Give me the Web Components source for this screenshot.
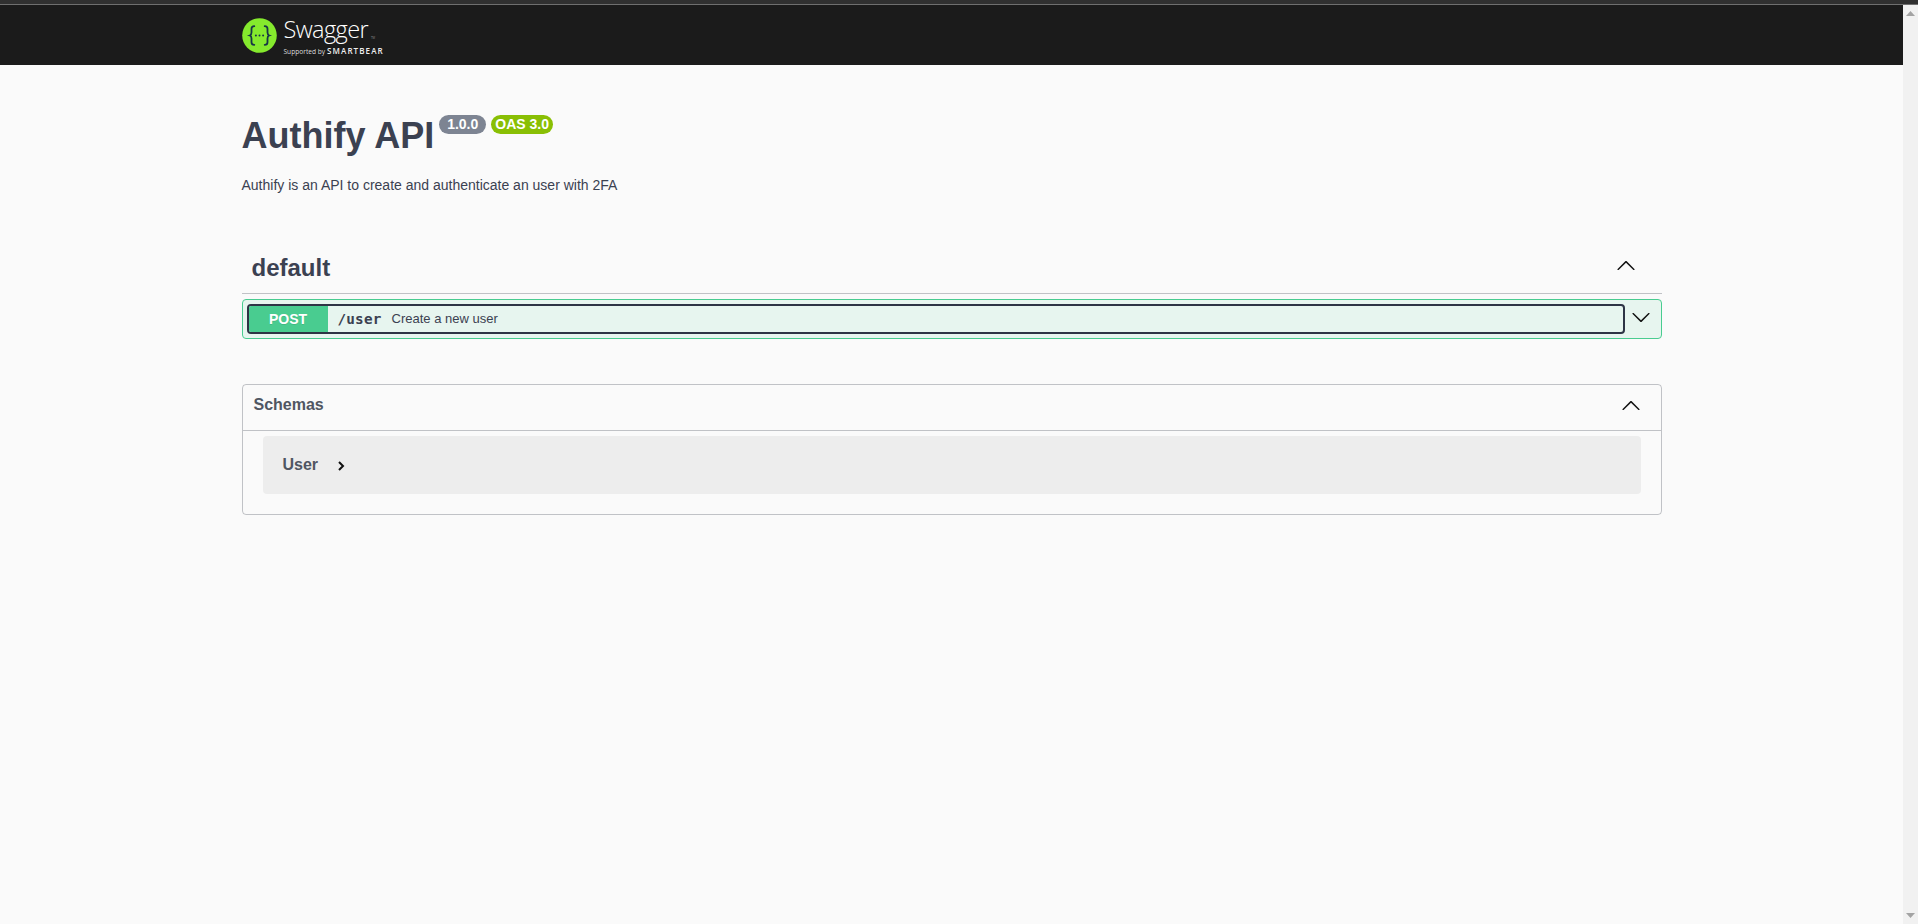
<!DOCTYPE html>
<html lang="en">
<head>
<meta charset="utf-8">
<title>Authify API</title>
<style>
  html, body { margin: 0; height: 100%; overflow: hidden; background: #fafafa; }
  body { font-family: "Liberation Sans", Arial, sans-serif; color: #3b4151; }
</style>
</head>
<body>
<swagger-app>
  <swagger-topbar slot="top"></swagger-topbar>
  <swagger-info title="Authify API" version="1.0.0" oas="OAS 3.0">
    Authify is an API to create and authenticate an user with 2FA
  </swagger-info>
  <api-tag name="default">
    <api-operation method="POST" path="/user">Create a new user</api-operation>
  </api-tag>
  <schema-section>
    <schema-model>User</schema-model>
  </schema-section>
</swagger-app>

<script>
// chevrons are the same swagger-ui arrow, only rotated
function arrowSvg(size, rotate) {
    return `<svg width="${size}" height="${size}" viewBox="0 0 20 20" style="transform: rotate(${rotate}deg)" aria-hidden="true">
        <path fill="currentColor" d="M17.418 6.109c.272-.268.709-.268.979 0s.271.701 0 .969l-7.908 7.83c-.27.268-.707.268-.979 0l-7.908-7.83c-.27-.268-.27-.701 0-.969.271-.268.709-.268.979 0L10 13.25l7.418-7.141z"/>
    </svg>`;
}

class SwaggerApp extends HTMLElement {
    constructor() {
        super();
        this.attachShadow({ mode: 'open' });
        this.shadowRoot.innerHTML = `
            <style>
                :host { display: flex; flex-direction: column; height: 924px; }
                .strip { height: 4px; background: #303030; flex: none; }
                .line { height: 1px; background: #6f6f6f; flex: none; }
                .body { display: flex; flex: 1; min-height: 0; }
                main { flex: 1; min-width: 0; }
                .wrapper { width: 1420px; margin: 0 auto; padding: 0 20.5px; box-sizing: content-box; }
            </style>
            <div class="strip"></div>
            <div class="line"></div>
            <div class="body">
                <main>
                    <slot name="top"></slot>
                    <div class="wrapper"><slot></slot></div>
                </main>
                <fake-scrollbar></fake-scrollbar>
            </div>
        `;
    }
}

class FakeScrollbar extends HTMLElement {
    constructor() {
        super();
        this.attachShadow({ mode: 'open' });
        this.shadowRoot.innerHTML = `
            <style>
                :host { display: flex; flex-direction: column; justify-content: space-between; width: 15px; flex: none; background: #f1f1f1; }
                div { height: 17px; display: flex; align-items: center; justify-content: center; }
                svg { display: block; }
            </style>
            <div><svg width="9" height="5"><path d="M4.5 0 9 5H0z" fill="#a3a3a3"/></svg></div>
            <div><svg width="9" height="5"><path d="M0 0h9L4.5 5z" fill="#a3a3a3"/></svg></div>
        `;
    }
}

class SwaggerTopbar extends HTMLElement {
    constructor() {
        super();
        this.attachShadow({ mode: 'open' });
        this.shadowRoot.innerHTML = `
            <style>
                :host { display: block; background: #1b1b1b; height: 60px; }
                .inner { width: 1420px; margin: 0 auto; height: 100%; display: flex; align-items: center; gap: 7px; }
                .words { display: flex; flex-direction: column; color: #fff; }
                .name { font: 300 23.5px/30px "Open Sans", sans-serif; letter-spacing: -0.6px; display: flex; align-items: flex-end; }
                .name small { font-size: 3px; line-height: 12px; margin-left: 3px; letter-spacing: 0; color: #bbb; }
                .by { font: 400 6.6px/9px "Open Sans", sans-serif; display: flex; align-items: baseline; gap: 2px; color: #ddd; margin-top: 2px; }
                .by b { font: 600 8px/9px "Open Sans", sans-serif; letter-spacing: 1.1px; color: #eee; }
            </style>
            <div class="inner">
                <svg width="35" height="35" viewBox="0 0 35 35" aria-hidden="true">
                    <circle cx="17.5" cy="17.5" r="17.3" fill="#85ea2d"/>
                    <g fill="none" stroke="#173647" stroke-width="1.8" stroke-linecap="round">
                        <path d="M12.3 8.2c-2 0-2.800.8-2.800 2.600v3.800c0 1.600-.5 2.500-1.700 2.900 1.200.4 1.700 1.300 1.700 2.900v3.800c0 1.800.8 2.600 2.800 2.600"/>
                        <path d="M22.700 8.200c2 0 2.800.8 2.800 2.600v3.800c0 1.600.5 2.500 1.700 2.900-1.200.4-1.700 1.300-1.700 2.900v3.800c0 1.800-.8 2.600-2.800 2.600"/>
                    </g>
                    <g fill="#173647">
                        <circle cx="13.900" cy="17.500" r="1"/>
                        <circle cx="17.500" cy="17.500" r="1"/>
                        <circle cx="21.100" cy="17.500" r="1"/>
                    </g>
                </svg>
                <div class="words">
                    <div class="name">Swagger<small>TM</small></div>
                    <div class="by">Supported by <b>SMARTBEAR</b></div>
                </div>
            </div>
        `;
    }
}

class SwaggerInfo extends HTMLElement {
    constructor() {
        super();
        this.attachShadow({ mode: 'open' });
        this.shadowRoot.innerHTML = `
            <style>
                :host { display: block; padding: 50px 0 0; }
                h1 { margin: 0; font-size: 36px; line-height: 42px; font-weight: 700; color: #3b4151; display: flex; align-items: flex-start; }
                .badge { font-size: 14px; font-weight: 700; line-height: 19px; height: 19px; color: #fff; border-radius: 57px; padding: 0 8px; margin-top: 0; }
                .version { background: #7d8492; margin-left: 5px; }
                .oas { background: #89bf04; margin-left: 5px; padding: 0 4px; }
                p { margin: 0; padding-top: 18px; font-size: 14px; line-height: 20px; color: #3b4151; }
            </style>
            <h1><span class="t"></span><span class="badge version"></span><span class="badge oas"></span></h1>
            <p><slot></slot></p>
        `;
        this.shadowRoot.querySelector('.t').textContent = this.getAttribute('title');
        this.shadowRoot.querySelector('.version').textContent = this.getAttribute('version');
        this.shadowRoot.querySelector('.oas').textContent = this.getAttribute('oas');
    }
}

class ApiTag extends HTMLElement {
    constructor() {
        super();
        this.attachShadow({ mode: 'open' });
        this.shadowRoot.innerHTML = `
            <style>
                :host { display: block; margin-top: 47px; }
                .head { display: flex; align-items: center; justify-content: space-between; height: 51px; padding: 0 26px 0 10px; border-bottom: 1px solid rgba(59,65,81,.3); }
                h3 { margin: 0; font-size: 24px; line-height: 30px; font-weight: 700; color: #3b4151; }
                .chev { color: #111; display: flex; margin-top: -3px; }
                .list { padding-top: 5px; }
            </style>
            <div class="head"><h3></h3><span class="chev">${arrowSvg(20, 180)}</span></div>
            <div class="list"><slot></slot></div>
        `;
        this.shadowRoot.querySelector('h3').textContent = this.getAttribute('name');
    }
}

class ApiOperation extends HTMLElement {
    constructor() {
        super();
        this.attachShadow({ mode: 'open' });
        this.shadowRoot.innerHTML = `
            <style>
                :host { display: flex; align-items: center; height: 40px; box-sizing: border-box; background: rgba(73,204,144,.1); border: 1px solid #49cc90; border-radius: 4px; padding: 0 10px 0 4px; }
                .focus { flex: 1; display: flex; align-items: stretch; height: 30px; box-sizing: border-box; border: 2px solid #2e3445; border-radius: 4px; }
                .method { width: 79px; margin: 0; padding-bottom: 1px; box-sizing: border-box; background: #49cc90; color: #fff; font-size: 14px; font-weight: 700; display: flex; align-items: center; justify-content: center; border-radius: 2px 0 0 2px; text-shadow: 0 1px 0 rgba(0,0,0,.1); }
                .path { font: 700 14.300px "DejaVu Sans Mono", monospace; letter-spacing: .2px; color: #3b4151; align-self: center; padding: 0 10px; margin-top: -1px; }
                .desc { font-size: 13px; color: #3b4151; align-self: center; margin-top: -1px; }
                .chev { color: #111; display: flex; margin-left: 6px; margin-top: -5px; }
            </style>
            <div class="focus">
                <span class="method"></span>
                <span class="path"></span>
                <span class="desc"><slot></slot></span>
            </div>
            <span class="chev">${arrowSvg(20, 0)}</span>
        `;
        this.shadowRoot.querySelector('.method').textContent = this.getAttribute('method');
        this.shadowRoot.querySelector('.path').textContent = this.getAttribute('path');
    }
}

class SchemaSection extends HTMLElement {
    constructor() {
        super();
        this.attachShadow({ mode: 'open' });
        this.shadowRoot.innerHTML = `
            <style>
                :host { display: block; margin-top: 45px; border: 1px solid rgba(59,65,81,.3); border-radius: 4px; }
                .head { display: flex; align-items: center; justify-content: space-between; height: 45px; padding: 0 20px 0 11px; border-bottom: 1px solid rgba(59,65,81,.3); }
                h4 { margin: 0 0 6px; font-size: 16px; font-weight: 700; color: #505662; }
                .chev { color: #111; display: flex; margin-bottom: 3px; }
                .body { padding: 5px 20px 20px; }
            </style>
            <div class="head"><h4>Schemas</h4><span class="chev">${arrowSvg(20, 180)}</span></div>
            <div class="body"><slot></slot></div>
        `;
    }
}

class SchemaModel extends HTMLElement {
    constructor() {
        super();
        this.attachShadow({ mode: 'open' });
        this.shadowRoot.innerHTML = `
            <style>
                :host { display: flex; align-items: center; height: 58px; padding: 0 20px; background: rgba(0,0,0,.05); border-radius: 4px; font-size: 16px; font-weight: 700; color: #505662; }
                .chev { display: flex; margin-left: 20px; margin-top: 2px; }
                path { fill: none; stroke: #111; stroke-width: 2; }
            </style>
            <span><slot></slot></span>
            <span class="chev"><svg width="7" height="10" viewBox="0 0 7 10" aria-hidden="true"><path d="M1 1l4 4-4 4"/></svg></span>
        `;
    }
}

customElements.define('swagger-app', SwaggerApp);
customElements.define('fake-scrollbar', FakeScrollbar);
customElements.define('swagger-topbar', SwaggerTopbar);
customElements.define('swagger-info', SwaggerInfo);
customElements.define('api-tag', ApiTag);
customElements.define('api-operation', ApiOperation);
customElements.define('schema-section', SchemaSection);
customElements.define('schema-model', SchemaModel);
</script>
</body>
</html>
